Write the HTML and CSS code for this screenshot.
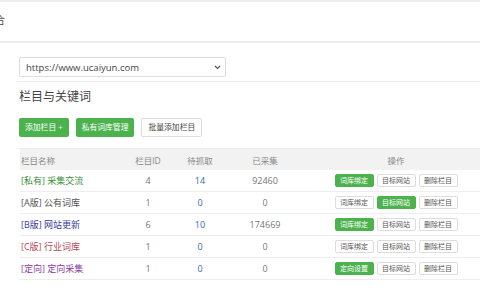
FILE: index.html
```html
<!DOCTYPE html>
<html>
<head>
<meta charset="utf-8">
<link rel="stylesheet" href="styles.css">
</head>
<body>
<div class="topbar"><span class="tab">合</span></div>
<div class="main">
  <div class="site-row">
    <div class="select"><span>https://www.ucaiyun.com</span><svg class="chev" width="7" height="5" viewBox="0 0 7 5"><path d="M1 1 L3.5 3.5 L6 1" fill="none" stroke="#555" stroke-width="1.2"/></svg></div>
  </div>
  <div class="section">
    <h2 class="title">栏目与关键词</h2>
    <div class="actions">
      <span class="btn green">添加栏目 +</span>
      <span class="btn green">私有词库管理</span>
      <span class="btn plain">批量添加栏目</span>
    </div>
  </div>
  <table class="grid">
    <colgroup><col class="c1"><col class="c2"><col class="c3"><col class="c4"><col class="c5"></colgroup>
    <thead>
      <tr><th class="l">栏目名称</th><th>栏目ID</th><th>待抓取</th><th>已采集</th><th>操作</th></tr>
    </thead>
    <tbody>
      <tr><td class="l n-priv">[私有] 采集交流</td><td>4</td><td class="blue">14</td><td>92460</td><td><div class="ops"><span class="sb on">词库绑定</span><span class="sb">目标网站</span><span class="sb">删除栏目</span></div></td></tr>
      <tr><td class="l n-a">[A版] 公有词库</td><td>1</td><td class="blue">0</td><td>0</td><td><div class="ops"><span class="sb">词库绑定</span><span class="sb on">目标网站</span><span class="sb">删除栏目</span></div></td></tr>
      <tr><td class="l n-b">[B版] 网站更新</td><td>6</td><td class="blue">10</td><td>174669</td><td><div class="ops"><span class="sb on">词库绑定</span><span class="sb">目标网站</span><span class="sb">删除栏目</span></div></td></tr>
      <tr><td class="l n-c">[C版] 行业词库</td><td>1</td><td class="blue">0</td><td>0</td><td><div class="ops"><span class="sb">词库绑定</span><span class="sb">目标网站</span><span class="sb">删除栏目</span></div></td></tr>
      <tr><td class="l n-d">[定向] 定向采集</td><td>1</td><td class="blue">0</td><td>0</td><td><div class="ops"><span class="sb on">定向设置</span><span class="sb">目标网站</span><span class="sb">删除栏目</span></div></td></tr>
    </tbody>
  </table>
</div>
</body>
</html>
```
FILE: styles.css
```css
html, body {
  margin: 0;
  padding: 0;
  background: #fff;
  overflow: hidden;
  width: 480px;
  height: 300px;
  font-family: "Open Sans", "Noto Sans CJK SC", sans-serif;
  color: #555;
}
.topbar {
  border-top: 2px solid #ececec;
  border-bottom: 2px solid #ececec;
  height: 39px;
  display: flex;
  align-items: center;
}
.tab {
  margin-left: -5px;
  margin-top: -4px;
  font-size: 10px;
  color: #444;
  line-height: 12px;
}
.main {
  padding-left: 17px;
}
.site-row {
  padding: 14px 0 4px 2px;
  border-bottom: 1px solid #eee;
}
.select {
  height: 18px;
  border: 1px solid #ddd;
  border-radius: 2px;
  display: flex;
  align-items: center;
  justify-content: space-between;
  padding: 0 4px 0 6px;
  box-sizing: content-box;
  width: 195px;
  font-size: 9.5px;
  color: #444;
}
.chev { margin-top: 1px; }
.section {
  padding: 7px 0 11px 2px;
  border-bottom: 1px solid #eee;
}
.title {
  margin: 0;
  font-size: 12px;
  font-weight: normal;
  color: #444;
  line-height: 16px;
}
.actions {
  display: flex;
  gap: 7px;
  margin-top: 13px;
}
.btn {
  height: 19px;
  line-height: 19px;
  padding: 0 6px;
  font-size: 7.8px;
  border-radius: 2px;
  box-sizing: border-box;
}
.btn.green {
  background: #4cb24e;
  color: #fff;
}
.btn.plain {
  border: 1px solid #ddd;
  color: #444;
  line-height: 17px;
}
.grid {
  margin-left: 3px;
  border-collapse: collapse;
  table-layout: fixed;
  width: 469px;
  font-size: 9px;
}
.c1 { width: 103px; }
.c2 { width: 50px; }
.c3 { width: 54px; }
.c4 { width: 76px; }
.c5 { width: 186px; }
.grid th {
  background: #f2f2f2;
  height: 21px;
  font-weight: normal;
  color: #888;
  text-align: center;
  padding: 0;
  font-size: 8.5px;
}
.grid td {
  height: 21px;
  border-bottom: 1px solid #eee;
  text-align: center;
  padding: 0;
  color: #777;
}
.grid .l { text-align: left; padding-left: 1px; }
.n-priv { color: #3c8f3c !important; }
.n-a { color: #555 !important; }
.n-b { color: #3a3a9e !important; }
.n-c { color: #b3475a !important; }
.n-d { color: #8a3c9c !important; }
.blue { color: #2d6db5 !important; }
.ops {
  display: flex;
  justify-content: center;
  gap: 3px;
}
.sb {
  width: 39px;
  height: 13px;
  line-height: 11px;
  font-size: 7px;
  border: 1px solid #ddd;
  border-radius: 2px;
  box-sizing: border-box;
  color: #555;
  text-align: center;
}
.sb.on {
  background: #4cb24e;
  border-color: #4cb24e;
  color: #fff;
}
```
